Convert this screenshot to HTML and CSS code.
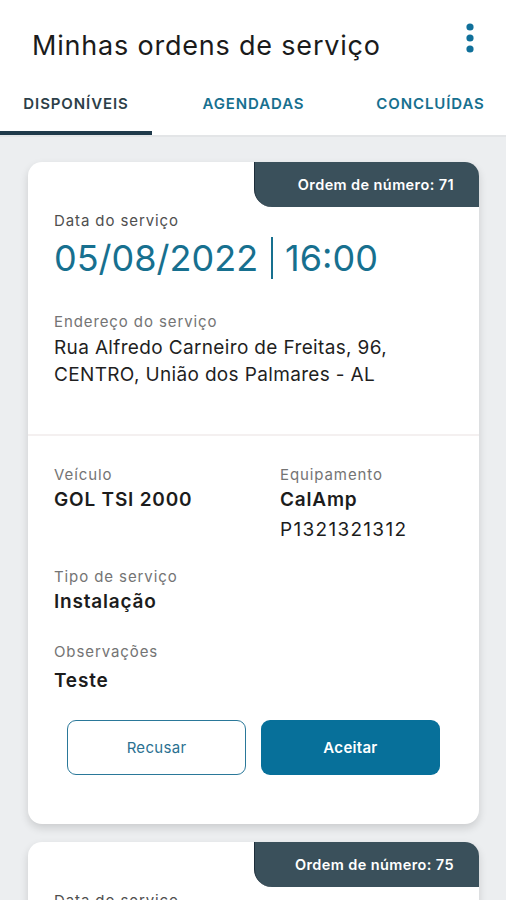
FILE: index.html
```html
<!DOCTYPE html>
<html>
<head>
    <meta charset="utf-8">
    <link rel="stylesheet" href="styles.css">
</head>
<body>
    <div class="app">
        <header class="topbar">
            <h1>Minhas ordens de serviço</h1>
            <button class="menu" aria-label="Mais opções">
                <svg width="12" height="30" viewBox="0 0 12 30">
                    <circle cx="6" cy="4" r="3.6"/>
                    <circle cx="6" cy="15" r="3.6"/>
                    <circle cx="6" cy="26" r="3.6"/>
                </svg>
            </button>
        </header>

        <nav class="tabs">
            <div class="tab active">DISPONÍVEIS</div>
            <div class="tab">AGENDADAS</div>
            <div class="tab">CONCLUÍDAS</div>
        </nav>

        <main class="list">
            <div class="card">
                <div class="badge-row"><span class="badge">Ordem de número: 71</span></div>
                <div class="card-top">
                    <div class="label">Data do serviço</div>
                    <div class="date">05/08/2022<span class="sep"></span>16:00</div>
                    <div class="label light addr-label">Endereço do serviço</div>
                    <div class="address">Rua Alfredo Carneiro de Freitas, 96,<br>CENTRO, União dos Palmares - AL</div>
                </div>
                <div class="card-body">
                    <div class="grid">
                        <div class="field">
                            <div class="label light">Veículo</div>
                            <div class="value">GOL TSI 2000</div>
                        </div>
                        <div class="field">
                            <div class="label light">Equipamento</div>
                            <div class="value">CalAmp</div>
                            <div class="value plain">P1321321312</div>
                        </div>
                    </div>
                    <div class="field kind">
                        <div class="label light">Tipo de serviço</div>
                        <div class="value">Instalação</div>
                    </div>
                    <div class="field notes">
                        <div class="label light">Observações</div>
                        <div class="value">Teste</div>
                    </div>
                    <div class="actions">
                        <button class="btn outline">Recusar</button>
                        <button class="btn solid">Aceitar</button>
                    </div>
                </div>
            </div>

            <div class="card">
                <div class="badge-row"><span class="badge">Ordem de número: 75</span></div>
                <div class="card-top">
                    <div class="label">Data do serviço</div>
                    <div class="date">06/08/2022<span class="sep"></span>09:00</div>
                </div>
            </div>
        </main>
    </div>
</body>
</html>
```

FILE: styles.css
```css
* {
    box-sizing: border-box;
}
html, body {
    margin: 0;
    height: 100%;
}
body {
    font-family: Inter, "Noto Sans", sans-serif;
    background: #eceef0;
    color: #1e1e1e;
    overflow: hidden;
}
.app {
    width: 506px;
}
.topbar {
    background: #fff;
    height: 84px;
    display: flex;
    align-items: flex-start;
    justify-content: space-between;
    padding: 0 30px 0 32px;
}
.topbar h1 {
    margin: 29px 0 0;
    font-size: 27px;
    font-weight: 400;
    line-height: 34px;
    color: #1b1b1b;
    letter-spacing: 0.8px;
    white-space: nowrap;
}
.menu {
    margin-top: 23px;
    border: 0;
    background: none;
    padding: 0;
    fill: #10709a;
}
.tabs {
    background: #fff;
    display: flex;
    height: 53px;
    border-bottom: 2px solid #e3e5e7;
}
.tab {
    flex: 0 0 151px;
    text-align: center;
    font-size: 15px;
    font-weight: 600;
    color: #17708f;
    padding-top: 10px;
    letter-spacing: 0.9px;
    white-space: nowrap;
}
.tabs .tab:first-child {
    flex: 0 0 152px;
}
.tabs .tab:nth-child(2) {
    flex: 0 0 203px;
}
.tab.active {
    color: #2d3f49;
    border-bottom: 4px solid #1f3a4b;
}
.list {
    padding: 25px 27px 0 28px;
}
.card {
    background: #fff;
    border-radius: 14px;
    box-shadow: 0 4px 8px rgba(0, 0, 0, 0.14);
    margin-bottom: 18px;
    overflow: hidden;
}
.badge-row {
    display: flex;
    justify-content: flex-end;
}
.badge {
    width: 225px;
    height: 45px;
    background: #3a505b;
    border-left: 1.5px solid #1d2d3a;
    color: #fff;
    font-size: 14.5px;
    font-weight: 600;
    text-align: right;
    line-height: 45px;
    padding-right: 25px;
    letter-spacing: 0.4px;
    border-radius: 0 0 0 18px;
}
.card-top {
    padding: 4px 26px 46px;
    border-bottom: 2px solid #f4f0f0;
}
.label {
    font-size: 15px;
    line-height: 20px;
    color: #4f4f4f;
    letter-spacing: 0.9px;
}
.label.light {
    color: #747474;
}
.date {
    font-size: 36px;
    line-height: 44px;
    color: #17708f;
    margin-top: 5px;
    display: flex;
    align-items: center;
}
.sep {
    display: inline-block;
    width: 2px;
    height: 42px;
    background: #17708f;
    margin: 0 12px 0 13px;
}
.addr-label {
    margin-top: 32px;
}
.address {
    font-size: 19px;
    line-height: 27px;
    margin-top: 2px;
    color: #1f1f1f;
    letter-spacing: 0.35px;
}
.card-body {
    padding: 29px 26px 49px;
}
.grid {
    display: grid;
    grid-template-columns: 226px 1fr;
}
.field {
    margin-bottom: 23px;
}
.field.kind {
    margin-bottom: 26px;
}
.value {
    font-size: 19px;
    font-weight: 600;
    line-height: 28px;
    margin-top: 1px;
    color: #1c1c1c;
    letter-spacing: 0.8px;
}
.value.plain {
    font-weight: 400;
    margin-top: 2px;
    letter-spacing: 1.3px;
}
.field.notes .value {
    margin-top: 5px;
}
.actions {
    display: flex;
    gap: 15px;
    padding: 0 13px;
    margin-top: 25px;
}
.btn {
    flex: 0 0 179px;
    height: 55px;
    border-radius: 9px;
    font-family: Inter, "Noto Sans", sans-serif;
    font-size: 15px;
    letter-spacing: 0.3px;
}
.btn.outline {
    background: #fff;
    border: 1.5px solid #2a7899;
    color: #2b7191;
}
.btn.solid {
    background: #07709a;
    border: 0;
    color: #fff;
    font-weight: 600;
}
```
